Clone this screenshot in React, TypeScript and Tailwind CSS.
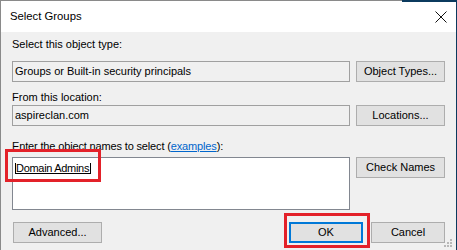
import React from 'react';

const btnBase = 'h-[21px] bg-[#e1e1e1] flex items-center justify-center text-black';
const btn = `${btnBase} border border-[#adadad]`;

export default function App() {
    return (
        <div className="relative w-[457px] h-[250px] overflow-hidden bg-[#0b3a5e] font-['Liberation_Sans',Arial,sans-serif] text-[11px] text-black">
            <div className="w-[456px] h-[250px] border-t border-l border-[#8a8a8a] bg-[#f0f0f0] flex flex-col">
                {/* title bar */}
                <div className="h-[31px] bg-white flex items-center justify-between pl-[9px] pr-[8px] shrink-0">
                    <span className="text-[11.3px]">Select Groups</span>
                    <svg width="12" height="12" viewBox="0 0 12 12" className="mr-[1px] mt-[1px]">
                        <path d="M0.5 0.5 L11.5 11.5 M11.5 0.5 L0.5 11.5" stroke="#111" strokeWidth="1" />
                    </svg>
                </div>

                <div className="pl-[11px] flex flex-col">
                    <div className="mt-[5px] leading-[14px]">Select this object type:</div>
                    <div className="mt-[10px] flex gap-[6px]">
                        <div className="w-[338px] h-[21px] border border-[#a0a0a0] bg-[#f0f0f0] flex items-center pl-[2px]">
                            Groups or Built-in security principals
                        </div>
                        <div className={`${btn} w-[89px]`}>Object Types...</div>
                    </div>

                    <div className="mt-[8px] leading-[14px]">From this location:</div>
                    <div className="mt-[1px] flex gap-[6px]">
                        <div className="w-[338px] h-[21px] border border-[#a0a0a0] bg-[#f0f0f0] flex items-center pl-[2px]">
                            aspireclan.com
                        </div>
                        <div className={`${btn} w-[89px]`}>Locations...</div>
                    </div>

                    <div className="mt-[13px] leading-[14px] tracking-[-0.15px]">
                        Enter the object names to select (
                        <span className="text-[#0066cc] underline">examples</span>):
                    </div>
                    <div className="mt-[4px] flex gap-[6px] items-start">
                        <div className="w-[338px] h-[53px] border border-[#828790] bg-white pl-[2px] pt-[2px]">
                            <span className="inline-block h-[11px] leading-[11px] tracking-[-0.3px] border-l border-b border-r border-black pr-[1px]">
                                Domain Admins
                            </span>
                        </div>
                        <div className={`${btn} w-[89px]`}>Check Names</div>
                    </div>

                    <div className="mt-[12px] flex">
                        <div className={`${btn} w-[89px] ml-[1px]`}>Advanced...</div>
                        <div className={`${btnBase} w-[74px] ml-[187px] border-2 border-[#0078d7]`}>OK</div>
                        <div className={`${btn} w-[74px] ml-[8px]`}>Cancel</div>
                    </div>
                </div>
            </div>

            {/* background window edge */}
            <div className="absolute top-0 left-[402px] w-[55px] h-[2px] bg-[#0b3a5e]" />

            {/* red annotation boxes */}
            <div className="absolute left-[5px] top-[149px] w-[96px] h-[33px] border-[3px] border-[#e32129]" />
            <div className="absolute left-[284px] top-[213px] w-[86px] h-[35px] border-[3px] border-[#e32129]" />

            {/* resize grip */}
            <svg className="absolute left-[444px] top-[239px]" width="10" height="10" viewBox="0 0 10 10">
                <g fill="#b8b8b8">
                    <rect x="6" y="0" width="2" height="2" />
                    <rect x="3" y="3" width="2" height="2" />
                    <rect x="6" y="3" width="2" height="2" />
                    <rect x="0" y="6" width="2" height="2" />
                    <rect x="3" y="6" width="2" height="2" />
                    <rect x="6" y="6" width="2" height="2" />
                </g>
            </svg>
        </div>
    );
}
